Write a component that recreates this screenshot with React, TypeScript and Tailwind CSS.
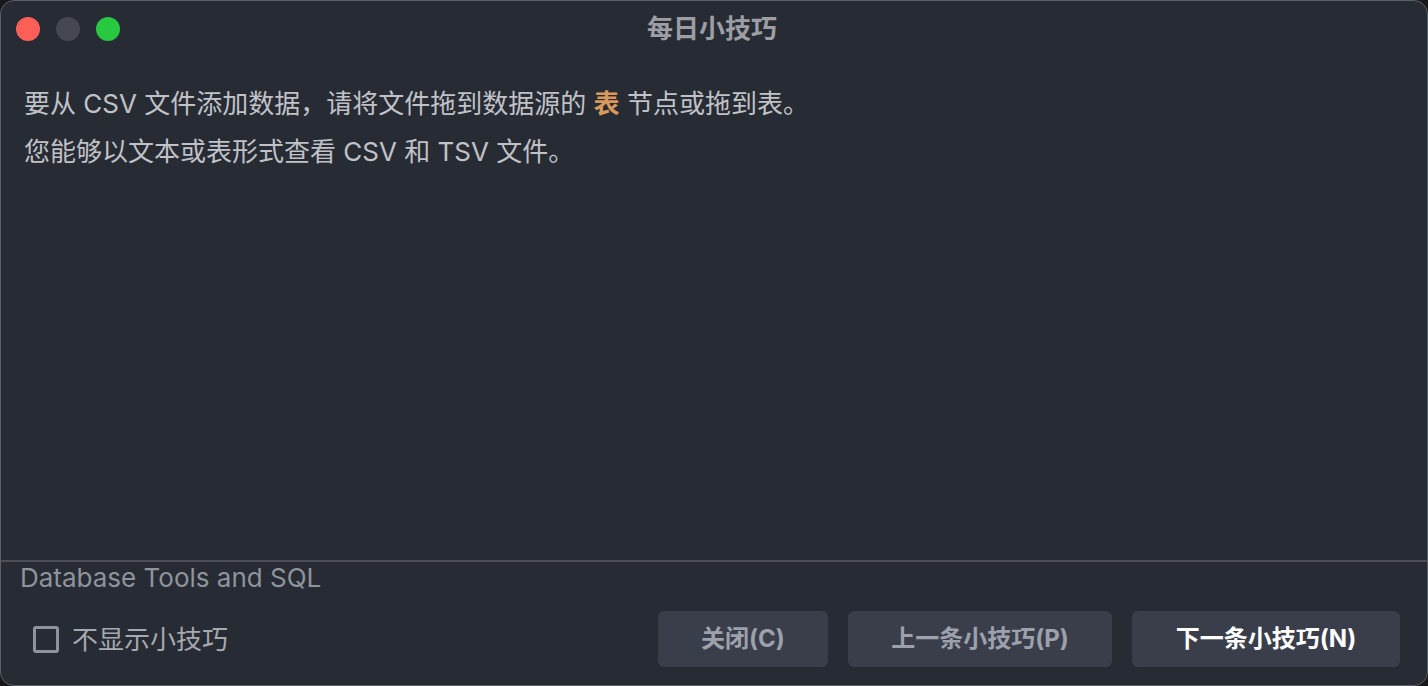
import React from "react";

const font = { fontFamily: '"Inter", "Noto Sans CJK SC", sans-serif' };

export default function App() {
  return (
    <div className="w-[1428px] h-[686px] bg-[#18181a]" style={font}>
      <div className="h-full flex flex-col rounded-[14px] border border-[#5c5f66] bg-[#272b33] overflow-hidden">
        {/* title bar */}
        <div className="h-[55px] grid grid-cols-[1fr_auto_1fr] items-center px-[15px]">
          <div className="flex items-center gap-[16px]">
            <span className="w-[24px] h-[24px] rounded-full bg-[#fe5f57]" />
            <span className="w-[24px] h-[24px] rounded-full bg-[#454851]" />
            <span className="w-[24px] h-[24px] rounded-full bg-[#28c840]" />
          </div>
          <div className="text-[26px] font-bold text-[#9c9ea3] leading-none pr-[4px]">每日小技巧</div>
          <div />
        </div>
        {/* body */}
        <div className="flex-1 px-[23px] pt-[24px] text-[26px] leading-[48px] text-[#c0c2c7]">
          <div>
            要从 CSV 文件添加数据，请将文件拖到数据源的{" "}
            <span className="text-[#d8995c] font-bold">表</span> 节点或拖到表。
          </div>
          <div>您能够以文本或表形式查看 CSV 和 TSV 文件。</div>
        </div>
        {/* footer */}
        <div className="border-t-2 border-[#4b4e55] pl-[19px] pr-[27px] pb-[18px]">
          <div className="text-[26px] leading-[32px] text-[#8f939c]">Database Tools and SQL</div>
          <div className="mt-[17px] flex items-center">
            <div className="flex items-center pl-[13px]">
              <span className="w-[26px] h-[27px] rounded-[3px] border-[3px] border-[#8e939d]" />
              <span className="ml-[13px] text-[26px] text-[#a6a9b0]">不显示小技巧</span>
            </div>
            <div className="ml-auto flex gap-[20px]">
              <button className="w-[170px] h-[56px] rounded-[6px] bg-[#3a3e4a] text-[24px] font-bold text-[#9ca1ac]">
                关闭(C)
              </button>
              <button className="w-[264px] h-[56px] rounded-[6px] bg-[#3a3e4a] text-[24px] font-bold text-[#9ca1ac]">
                上一条小技巧(P)
              </button>
              <button className="w-[268px] h-[56px] rounded-[6px] bg-[#3a3e4a] text-[24px] font-bold text-white">
                下一条小技巧(N)
              </button>
            </div>
          </div>
        </div>
      </div>
    </div>
  );
}
